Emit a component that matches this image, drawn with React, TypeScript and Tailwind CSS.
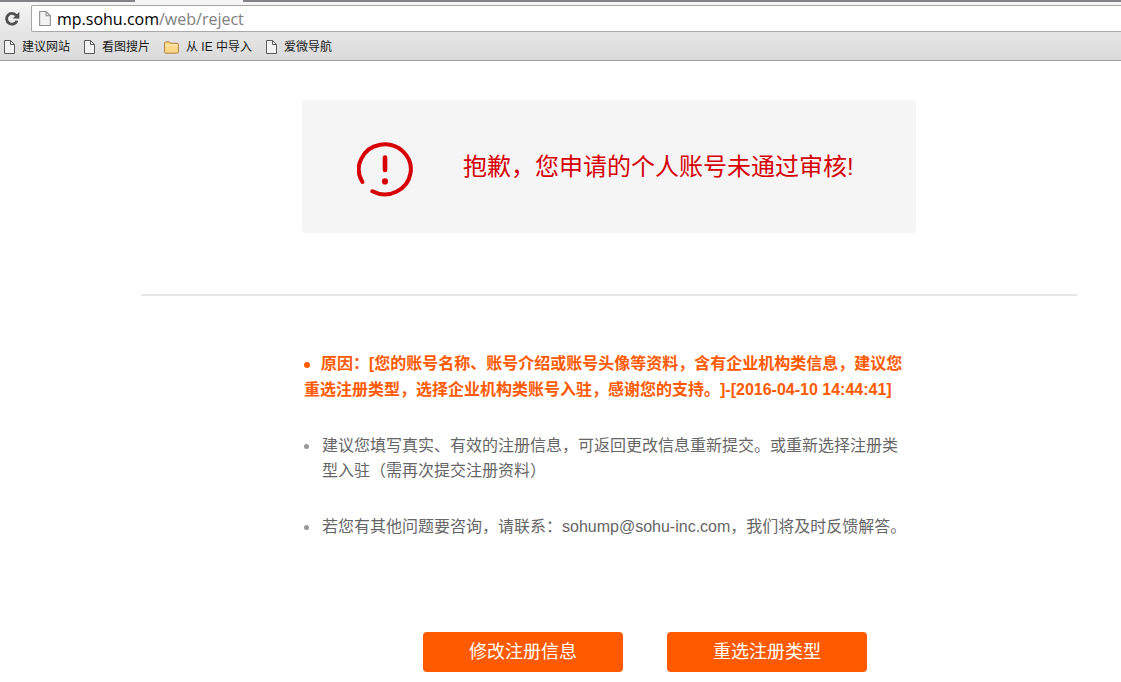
import React from 'react';

const bookmarks = [
  { label: '建议网站', folder: false },
  { label: '看图搜片', folder: false },
  { label: '从 IE 中导入', folder: true },
  { label: '爱微导航', folder: false },
];

const tips = [
  '建议您填写真实、有效的注册信息，可返回更改信息重新提交。或重新选择注册类型入驻（需再次提交注册资料）',
  '若您有其他问题要咨询，请联系：sohump@sohu-inc.com，我们将及时反馈解答。',
];

const actions = ['修改注册信息', '重选注册类型'];

function PageIcon({ className }: { className: string }) {
  return (
    <svg viewBox="0 0 11 14" fill="none" stroke="currentColor" className={className}>
      <path d="M0.5 0.5H6.5L10.5 4.5V13.5H0.5Z" fill="#f2f2f2" />
      <path d="M6.5 0.5V4.5H10.5" />
    </svg>
  );
}

function FolderIcon() {
  return (
    <svg viewBox="0 0 16 13" className="h-[13px] w-[15px]">
      <path
        d="M0.5 11V2Q0.5 0.5 2 0.5H5.5Q6.5 0.5 7 2H14Q15.5 2 15.5 3.5V11Q15.5 12.5 14 12.5H2Q0.5 12.5 0.5 11Z"
        fill="#fbd887"
        stroke="#b07a35"
      />
      <path d="M1.5 4H14.5" stroke="#fff0c4" />
    </svg>
  );
}

function ReloadIcon() {
  return (
    <svg viewBox="0 0 16 16" className="h-4 w-4">
      <path
        d="M12.2 4.4A5.4 5.4 0 1 0 13 9.8"
        fill="none"
        stroke="#505050"
        strokeWidth="2.8"
      />
      <path d="M15.4 0.8V7.4H8.8Z" fill="#505050" />
    </svg>
  );
}

function AlertIcon() {
  return (
    <svg
      viewBox="0 0 56 60"
      fill="none"
      stroke="#d60006"
      strokeWidth="4"
      strokeLinecap="round"
      className="h-[60px] w-14 shrink-0"
    >
      <path d="M5.4 45A26 25 0 1 1 15.4 54.3" />
      <path d="M28 20.5V33" strokeWidth="4.6" />
      <circle cx="28" cy="44.4" r="3.1" fill="#d60006" stroke="none" />
    </svg>
  );
}

function BrowserBar() {
  return (
    <header className="border-b border-[#9b9b9b] bg-[#dedede]">
      <div className="flex h-[2px] bg-[#85818a]">
        <div className="ml-[135px] w-[108px] bg-[#f4f4f4]" />
      </div>
      <div className="flex items-center bg-linear-to-b from-[#f6f6f6] to-[#e6e6e6] pt-[3px] pl-1">
        <button type="button" aria-label="重新加载" className="mr-[11px]">
          <ReloadIcon />
        </button>
        <div className="flex h-[27px] flex-1 items-center rounded-l-xs border border-r-0 border-[#a8a8a8] bg-white pl-[7px]">
          <PageIcon className="mr-[6px] h-[15px] w-[12px] text-[#8f8f8f]" />
          <div className="font-['Open_Sans',sans-serif] text-[16px] leading-6 text-[#808080]">
            <span className="text-black">mp.sohu.com</span>/web/reject
          </div>
        </div>
      </div>
      <nav className="flex h-7 items-center gap-[14px] bg-linear-to-b from-[#e6e6e6] to-[#dadada] pt-[2px] pl-1">
        {bookmarks.map((item) => (
          <a
            key={item.label}
            href="#"
            className="flex items-center gap-[7px] text-[12px] leading-4 text-[#1a1a1a]"
          >
            {item.folder ? (
              <FolderIcon />
            ) : (
              <PageIcon className="h-[14px] w-[11px] text-[#5a5a5a]" />
            )}
            {item.label}
          </a>
        ))}
      </nav>
    </header>
  );
}

export default function App() {
  return (
    <div className="min-h-screen bg-white font-['Liberation_Sans','Noto_Sans_CJK_SC',sans-serif] [text-spacing-trim:space-all]">
      <BrowserBar />

      <main className="mr-11 ml-[141px] pt-[39px] pb-[10px]">
        {/* Result banner */}
        <section className="mx-auto flex max-w-[614px] items-center gap-[50px] rounded bg-[#f5f5f5] py-9 pl-[55px]">
          <AlertIcon />
          <h1 className="text-[24px] leading-[61px] text-[#d60006]">
            抱歉，您申请的个人账号未通过审核!
          </h1>
        </section>

        <hr className="mt-[61px] mb-[55px] border-t-2 border-[#e6e6e6]" />

        {/* Reason and tips */}
        <section className="mx-auto max-w-[614px] pl-[2px] text-[16px]">
          <p className="leading-[26px] font-bold text-[#ff5a00]">
            <span className="mr-[11px] inline-block h-[6px] w-[6px] rounded-full bg-[#ff5a00] align-middle" />
            原因：[您的账号名称、账号介绍或账号头像等资料，含有企业机构类信息，建议您重选注册类型，选择企业机构类账号入驻，感谢您的支持。]-[2016-04-10 14:44:41]
          </p>
          <ul className="mt-[30px] flex flex-col gap-[31px] pr-1 leading-[25px] text-[#666666]">
            {tips.map((tip) => (
              <li key={tip} className="flex">
                <span className="mt-[11px] mr-[13px] h-[5px] w-[5px] shrink-0 rounded-full bg-[#999999]" />
                <span>{tip}</span>
              </li>
            ))}
          </ul>
        </section>

        <div className="mt-[93px] flex justify-center gap-11 pl-[72px]">
          {actions.map((label) => (
            <button
              key={label}
              type="button"
              className="h-10 w-[200px] rounded bg-[#ff5a00] text-[18px] text-white"
            >
              {label}
            </button>
          ))}
        </div>
      </main>
    </div>
  );
}
